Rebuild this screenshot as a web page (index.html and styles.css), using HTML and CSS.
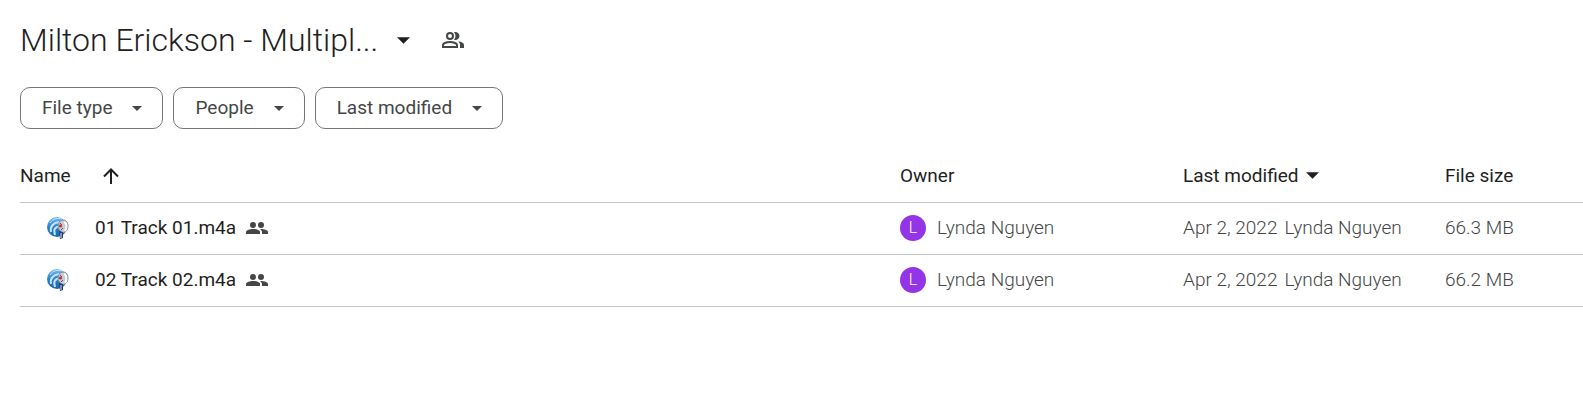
FILE: index.html
```html
<!DOCTYPE html>
<html lang="en">
<head>
<meta charset="UTF-8">
<meta name="viewport" content="width=device-width, initial-scale=1.0">
<title>Milton Erickson - Multipl...</title>
<link rel="stylesheet" href="styles.css">
</head>
<body>
    <!-- Shared icons -->
    <svg class="sprite" aria-hidden="true">
        <symbol id="caret" viewBox="0 0 12 6"><path d="M0 0h12L6 6z"/></symbol>
        <symbol id="people" viewBox="0 0 22 12">
            <circle cx="7" cy="3" r="3"/>
            <circle cx="15" cy="3" r="3"/>
            <path d="M0 12v-2c0-2 4-3 7-3s7 1 7 3v2z"/>
            <path d="M15 7c3 0 7 1 7 3v2h-6v-2c0-1-1-2-2-3z"/>
        </symbol>
        <symbol id="audio" viewBox="0 0 22 22">
            <circle cx="10" cy="10" r="10" fill="url(#disc)"/>
            <path d="M4 15C3 9 6 6 12 5M8 18C6 12 8 10 13 9" fill="none" stroke="#c4e4fb" stroke-width="2"/>
            <path d="M3 6C6 1 11 1 15 2" fill="none" stroke="#c8e6fb" stroke-width="1"/>
            <path d="M12 5c2-2 6-3 8 0 2 4 1 8-2 10l-3 1-4-5z" fill="#c9cbd2" stroke="#8b8e99" stroke-width="1"/>
            <path d="M17 5c3 1 3 6 1 9" fill="none" stroke="#fff" stroke-width="2"/>
            <path d="M13 6l2 2M16 11l-2 2" stroke="#555967" stroke-width="1"/>
            <circle cx="13.5" cy="9" r="1.6" fill="#c52e3b"/>
            <path d="M12 14l4 1v6l-3 1z" fill="#263b69"/>
            <path d="M14 16v5" stroke="#dce8f6" stroke-width="1"/>
        </symbol>
        <linearGradient id="disc" x1="0" y1="0" x2="0" y2="1">
            <stop offset="0" stop-color="#78baf0"/>
            <stop offset="0.5" stop-color="#2582d4"/>
            <stop offset="1" stop-color="#1c62ad"/>
        </linearGradient>
    </svg>

    <!-- Folder title -->
    <header class="folder-header">
        <h1><button class="folder-title" type="button">Milton Erickson - Multipl...<svg class="caret"><use href="#caret"/></svg></button></h1>
        <button class="share-button" type="button" aria-label="Manage access">
            <svg class="share-icon" viewBox="0 0 22 16">
                <circle cx="8" cy="4" r="3" fill="none" stroke="currentColor" stroke-width="2"/>
                <path d="M1 15v-2c0-2 4-3 7-3s7 1 7 3v2z" fill="none" stroke="currentColor" stroke-width="2"/>
                <path d="M12 0.200C15 -.6 17.500 1.300 17.500 4S15 8.600 12 7.800c2-2.400 2-5.200 0-7.600z"/>
                <path d="M16 9.200c3 .5 6 1.600 6 3.800v3h-4v-3c0-1.600-.7-2.800-2-3.800z"/>
            </svg>
        </button>
    </header>

    <!-- Filters -->
    <div class="filters">
        <button class="filter" type="button">File type<svg class="caret-small"><use href="#caret"/></svg></button>
        <button class="filter" type="button">People<svg class="caret-small"><use href="#caret"/></svg></button>
        <button class="filter" type="button">Last modified<svg class="caret-small"><use href="#caret"/></svg></button>
    </div>

    <!-- File list -->
    <table class="files">
        <thead>
            <tr>
                <th class="col-name" scope="col">
                    <div class="cell name-head">Name
                        <button class="sort-button" type="button" aria-label="Reverse sort direction">
                            <svg class="sort-arrow" viewBox="0 0 16 16"><path d="M8 16V2M1 8.500l7-7 7 7" fill="none" stroke="currentColor" stroke-width="2"/></svg>
                        </button>
                    </div>
                </th>
                <th class="col-owner" scope="col">Owner</th>
                <th class="col-modified" scope="col"><button class="modified-button" type="button">Last modified<svg class="caret"><use href="#caret"/></svg></button></th>
                <th class="col-size" scope="col">File size</th>
            </tr>
        </thead>
        <tbody>
            <tr>
                <td class="file-name"><div class="cell"><svg class="file-icon"><use href="#audio"/></svg>01 Track 01.m4a<svg class="people"><use href="#people"/></svg></div></td>
                <td><div class="cell"><span class="avatar">L</span>Lynda Nguyen</div></td>
                <td><div class="cell modified"><span>Apr 2, 2022</span><span>Lynda Nguyen</span></div></td>
                <td>66.3 MB</td>
            </tr>
            <tr>
                <td class="file-name"><div class="cell"><svg class="file-icon"><use href="#audio"/></svg>02 Track 02.m4a<svg class="people"><use href="#people"/></svg></div></td>
                <td><div class="cell"><span class="avatar">L</span>Lynda Nguyen</div></td>
                <td><div class="cell modified"><span>Apr 2, 2022</span><span>Lynda Nguyen</span></div></td>
                <td>66.2 MB</td>
            </tr>
        </tbody>
    </table>
</body>
</html>
```

FILE: styles.css
```css
/* General Reset */
* {
    margin: 0;
    padding: 0;
    box-sizing: border-box;
}

body {
    padding: 20px 0 20px 20px;
    font-family: Roboto, "Liberation Sans", sans-serif;
    font-size: 19px;
    line-height: 24px;
    color: #1f1f1f;
    background-color: white;
}

button {
    font: inherit;
    color: inherit;
    background: none;
    border: none;
    cursor: pointer;
}

svg {
    flex-shrink: 0;
    fill: currentColor;
}

.sprite {
    position: absolute;
    width: 0;
    height: 0;
}

.caret {
    width: 13px;
    height: 7px;
}

.caret-small {
    width: 10px;
    height: 5px;
}

/* Folder title */
.folder-header {
    display: flex;
    align-items: center;
    gap: 32px;
    height: 40px;
}

h1 {
    font-size: 32px;
    font-weight: 300;
    line-height: 40px;
}

.folder-title {
    display: flex;
    align-items: center;
    gap: 19px;
}

.share-button {
    display: flex;
    color: #444746;
}

.share-icon {
    width: 22px;
    height: 16px;
}

/* Filters */
.filters {
    display: flex;
    gap: 10px;
    margin-top: 27px;
}

.filter {
    display: flex;
    align-items: center;
    gap: 20px;
    height: 42px;
    padding: 0 20px 0 21px;
    color: #444746;
    border: 1px solid #747775;
    border-radius: 10px;
}

/* File list */
.files {
    width: 100%;
    margin-top: 21px;
    table-layout: fixed;
    border-collapse: collapse;
}

th,
td {
    height: 52px;
    text-align: left;
    white-space: nowrap;
    border-bottom: 1px solid #c4c7c5;
}

th {
    font-weight: 400;
}

td {
    color: #444746;
    font-weight: 300;
}

.col-owner {
    width: 283px;
}

.col-modified {
    width: 262px;
}

.col-size {
    width: 138px;
}

.cell {
    display: flex;
    align-items: center;
}

.name-head {
    gap: 32px;
}

.sort-button {
    display: flex;
}

.sort-arrow {
    width: 16px;
    height: 16px;
}

.modified-button {
    display: flex;
    align-items: center;
    gap: 8px;
}

.file-name {
    padding-left: 27px;
    color: #1f1f1f;
    font-weight: 400;
}

.file-icon {
    width: 22px;
    height: 22px;
    margin-right: 26px;
}

.people {
    width: 22px;
    height: 12px;
    margin-left: 10px;
    color: #444746;
}

.avatar {
    width: 26px;
    height: 26px;
    margin-right: 11px;
    border-radius: 50%;
    font-size: 16px;
    line-height: 26px;
    text-align: center;
    color: white;
    background-color: #9334e6;
}

.modified {
    gap: 7px;
}
```
